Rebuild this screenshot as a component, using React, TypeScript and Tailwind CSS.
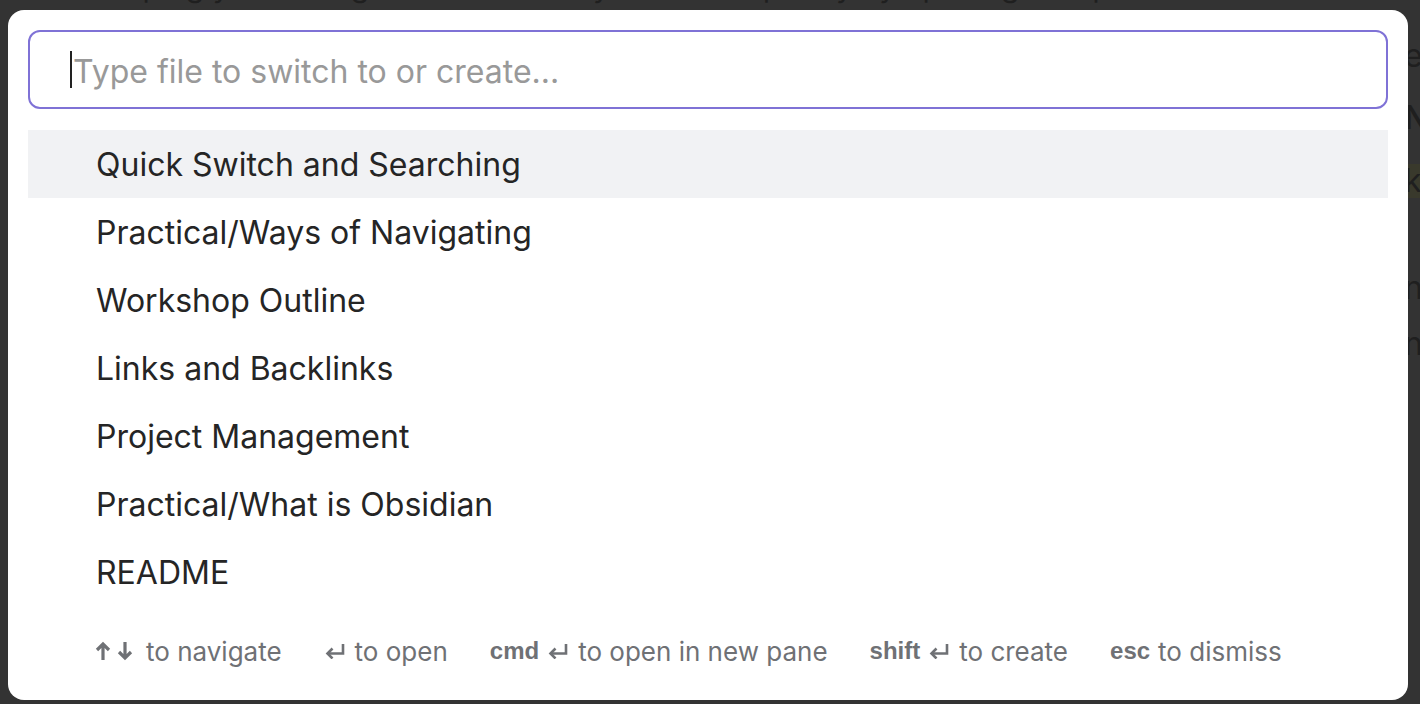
import React from 'react';

const files = [
  'Quick Switch and Searching',
  'Practical/Ways of Navigating',
  'Workshop Outline',
  'Links and Backlinks',
  'Project Management',
  'Practical/What is Obsidian',
  'README',
];

const Arrows = () => (
  <svg width="40" height="22" viewBox="0 0 40 22" className="mr-[12px]">
    <g fill="none" stroke="#6f7175" strokeWidth="3.2">
      <path d="M9 20V4M3 10l6-6 6 6" />
      <path d="M31 2v16M25 12l6 6 6-6" />
    </g>
  </svg>
);

const Enter = () => (
  <svg width="21" height="16" viewBox="0 0 21 16" className="mr-[10px]">
    <g fill="none" stroke="#6f7175" strokeWidth="2.6">
      <path d="M19 1v9.5H4" />
      <path d="M8.5 5.5l-5 5 5 5" />
    </g>
  </svg>
);

const Hint = ({ k, ret, label }: { k?: string; ret?: boolean; label: string }) => (
  <div className="flex items-center">
    {k && <span className="mr-[8px] font-['Liberation_Sans',sans-serif] text-[24px] font-bold">{k}</span>}
    {ret && <Enter />}
    <span>{label}</span>
  </div>
);

export default function App() {
  return (
    <div className="relative h-[704px] w-[1420px] overflow-hidden bg-[#333333] font-['Inter',sans-serif]">
      {/* page behind the switcher */}
      <div className="-mt-[29px] pl-[100px] text-[30px] leading-none whitespace-nowrap text-[#1f1f1f]">
        helping you manage and switch to your notes quickly by opening the quick switcher
      </div>
      <div className="absolute left-[1404px] top-[40px] flex flex-col text-[32px] leading-none text-[#1f1f1f]">
        <span className="h-[34px]">e</span>
        <span className="mt-[28px] h-[34px] font-semibold">N</span>
        <span className="mt-[28px] h-[34px] bg-[#39392c] pt-[1px]">k</span>
        <span className="mt-[74px] h-[34px]">n</span>
        <span className="mt-[22px] h-[34px]">n</span>
      </div>

      <div className="absolute left-[8px] top-[10px] flex h-[690px] w-[1400px] flex-col rounded-[16px] bg-white px-[20px] pt-[20px]">
        <div className="flex h-[79px] items-center rounded-[12px] border-2 border-[#7f72d6] pl-[40px] text-[32px] text-[#999999]">
          <span className="mr-[1px] h-[37px] w-[2px] bg-[#222222]" />
          <span className="pt-[4px]">Type file to switch to or create...</span>
        </div>

        <div className="mt-[21px] flex flex-col">
          {files.map((f, i) => (
            <div
              key={f}
              className={`flex h-[68px] items-center pl-[68px] pt-[2px] text-[32px] text-[#252525] ${i === 0 ? 'bg-[#f1f2f4]' : ''}`}
            >
              {f}
            </div>
          ))}
        </div>

        <div className="flex h-[90px] items-center gap-[42px] pl-[66px] text-[26px] text-[#6f7175]">
          <div className="flex items-center">
            <Arrows />
            <span>to navigate</span>
          </div>
          <Hint ret label="to open" />
          <Hint k="cmd" ret label="to open in new pane" />
          <Hint k="shift" ret label="to create" />
          <Hint k="esc" label="to dismiss" />
        </div>
      </div>
    </div>
  );
}
